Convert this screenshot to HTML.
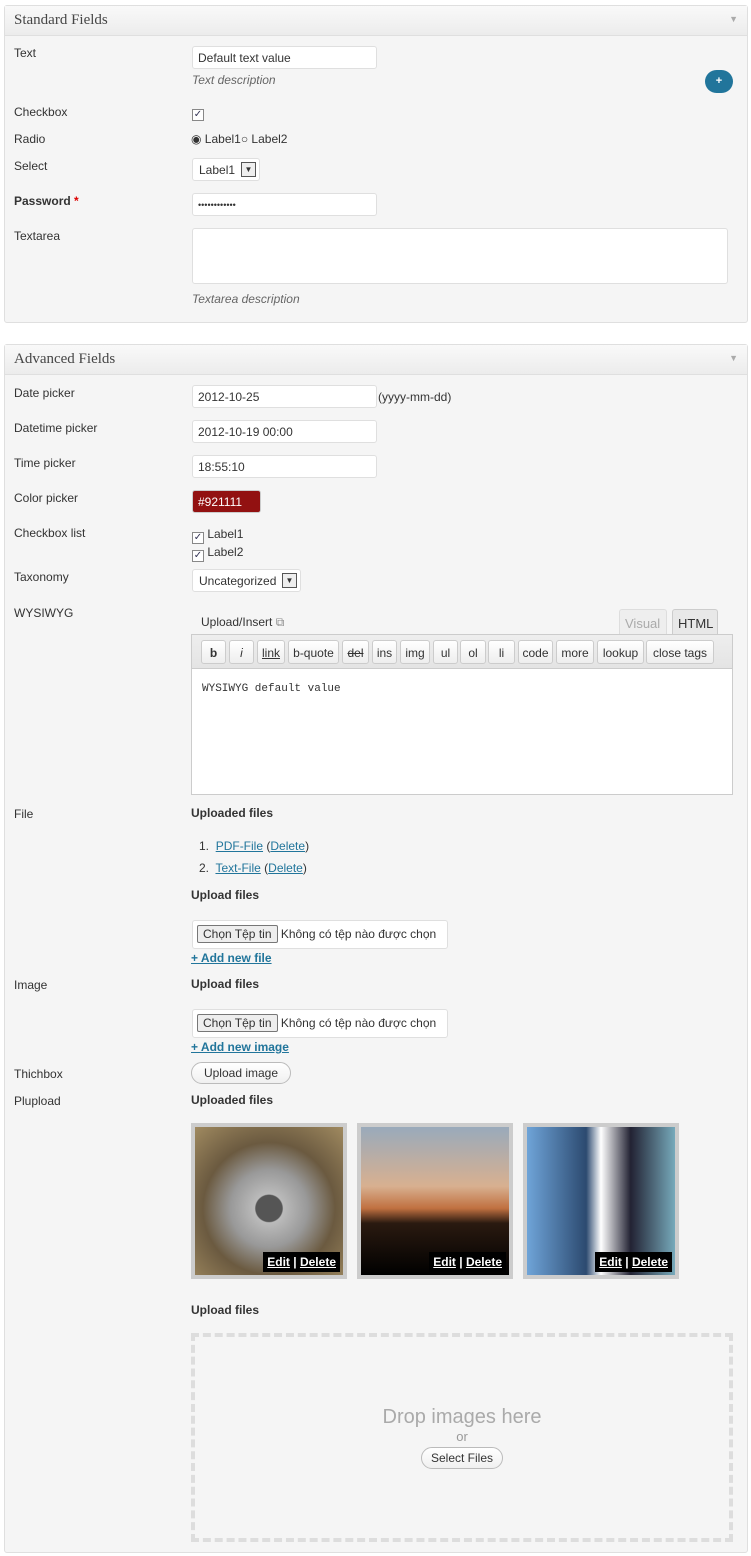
<!DOCTYPE html>
<html><head><meta charset="utf-8"><style>
*{box-sizing:border-box}
body{margin:0;width:751px;height:1556px;background:#fff;font-family:"Liberation Sans",Arial,sans-serif;font-size:12px;color:#333;position:relative;overflow:hidden}
.a{position:absolute}
.panel{position:absolute;left:4px;width:744px;background:#f5f5f5;border:1px solid #dfdfdf;border-radius:3px}
.hd{height:30px;background:linear-gradient(#f9f9f9,#ececec);border-bottom:1px solid #dfdfdf;font-family:"Liberation Serif",Georgia,serif;font-size:15px;color:#464646;padding:6px 9px}
.hd:after{content:"▼";position:absolute;right:9px;top:8px;font-size:9px;color:#aaa}
.lbl{position:absolute;left:14px;font-size:12px;color:#333}
.inp{position:absolute;background:#fff;border:1px solid #dfdfdf;border-radius:3px;height:23px;padding:4px 5px;font-size:12px;color:#333}
.desc{position:absolute;font-style:italic;color:#666;font-size:12px}
.cb{display:inline-block;width:12px;height:12px;border:1px solid #888;background:#fff;vertical-align:-2px;font-size:10px;line-height:10px;text-align:center;color:#335}
.btn{position:absolute;top:5px;border:1px solid #ccc;border-radius:3px;background:linear-gradient(#fff,#eee);height:24px;padding:5px 0;font-size:12px;color:#333;text-align:center}
.b{font-weight:bold}
a{color:#21759b}
.th{position:absolute;top:1123px;width:156px;height:156px;border:4px solid #ccc}
.ed{position:absolute;right:3px;bottom:3px;background:#000;color:#fff;font-weight:bold;padding:3px 4px;font-size:12px}
.ed u{color:#fff}
</style></head><body>
<div class="panel" style="top:5px;height:318px">
<div class="hd">Standard Fields</div>
</div>
<div class="lbl" style="top:46px">Text</div>
<div class="inp" style="left:192px;top:46px;width:185px">Default text value</div>
<div class="desc" style="left:192px;top:73px">Text description</div>
<div class="a" style="left:705px;top:70px;width:28px;height:23px;border-radius:12px;background:#21759b;color:#fff;text-align:center;font-size:11px;line-height:22px;font-weight:bold">+</div>
<div class="lbl" style="top:105px">Checkbox</div>
<div class="a" style="left:192px;top:104px"><span class="cb">✓</span></div>
<div class="lbl" style="top:132px">Radio</div>
<div class="a" style="left:191px;top:132px">◉ Label1○ Label2</div>
<div class="lbl" style="top:159px">Select</div>
<div class="inp" style="left:192px;top:158px;width:68px;padding:4px 6px">Label1 <span style="position:absolute;right:3px;top:3px;width:15px;height:15px;border:1px solid #555;background:#eee;font-size:8px;text-align:center;line-height:14px">▼</span></div>
<div class="lbl b" style="top:194px">Password <span style="color:#d00">*</span></div>
<div class="inp" style="left:192px;top:193px;width:185px;font-size:9px;padding-top:6px">••••••••••••</div>
<div class="lbl" style="top:229px">Textarea</div>
<div class="inp" style="left:192px;top:228px;width:536px;height:56px"></div>
<div class="desc" style="left:192px;top:292px">Textarea description</div>

<div class="panel" style="top:344px;height:1209px">
<div class="hd">Advanced Fields</div>
</div>
<div class="lbl" style="top:386px">Date picker</div>
<div class="inp" style="left:192px;top:385px;width:185px">2012-10-25</div>
<div class="a" style="left:378px;top:390px">(yyyy-mm-dd)</div>
<div class="lbl" style="top:421px">Datetime picker</div>
<div class="inp" style="left:192px;top:420px;width:185px">2012-10-19 00:00</div>
<div class="lbl" style="top:456px">Time picker</div>
<div class="inp" style="left:192px;top:455px;width:185px">18:55:10</div>
<div class="lbl" style="top:491px">Color picker</div>
<div class="inp" style="left:192px;top:490px;width:69px;background:#921111;color:#fff;border-color:#ccc">#921111</div>
<div class="lbl" style="top:526px">Checkbox list</div>
<div class="a" style="left:192px;top:526px;line-height:17px"><span class="cb">✓</span> Label1<br><span class="cb">✓</span> Label2</div>
<div class="lbl" style="top:570px">Taxonomy</div>
<div class="inp" style="left:192px;top:569px;width:109px;padding:4px 6px">Uncategorized <span style="position:absolute;right:3px;top:3px;width:15px;height:15px;border:1px solid #555;background:#eee;font-size:8px;text-align:center;line-height:14px">▼</span></div>
<div class="lbl" style="top:606px">WYSIWYG</div>
<div class="a" style="left:201px;top:615px">Upload/Insert <span style="color:#888">⧉</span></div>
<div class="a" style="left:619px;top:609px;width:48px;height:26px;border:1px solid #ddd;border-bottom:none;background:#eee;color:#aaa;font-size:13px;padding:6px 5px;border-radius:3px 3px 0 0">Visual</div>
<div class="a" style="left:672px;top:609px;width:46px;height:27px;border:1px solid #ccc;border-bottom:none;background:#e8e8e8;color:#333;font-size:13px;padding:6px 5px;border-radius:3px 3px 0 0">HTML</div>
<div class="a" style="left:191px;top:634px;width:542px;height:161px;border:1px solid #ccc;background:#fff">
<div style="position:relative;height:34px;background:linear-gradient(#eee,#e4e4e4);border-bottom:1px solid #ccc;white-space:nowrap">
<span class="btn b" style="left:9px;width:25px">b</span>
<span class="btn" style="left:37px;width:25px;font-style:italic">i</span>
<span class="btn" style="left:65px;width:28px;text-decoration:underline">link</span>
<span class="btn" style="left:96px;width:51px">b-quote</span>
<span class="btn" style="left:150px;width:27px;text-decoration:line-through">del</span>
<span class="btn" style="left:180px;width:25px">ins</span>
<span class="btn" style="left:208px;width:30px">img</span>
<span class="btn" style="left:241px;width:25px">ul</span>
<span class="btn" style="left:268px;width:26px">ol</span>
<span class="btn" style="left:296px;width:27px">li</span>
<span class="btn" style="left:326px;width:35px">code</span>
<span class="btn" style="left:364px;width:38px">more</span>
<span class="btn" style="left:405px;width:47px">lookup</span>
<span class="btn" style="left:454px;width:68px">close tags</span>
</div>
<div style="font-family:'Liberation Mono',monospace;font-size:11px;padding:14px 10px">WYSIWYG default value</div>
</div>
<div class="lbl" style="top:807px">File</div>
<div class="a b" style="left:191px;top:806px">Uploaded files</div>
<div class="a" style="left:199px;top:835px;line-height:22px">1.&nbsp; <a href="#">PDF-File</a> (<a href="#">Delete</a>)<br>2.&nbsp; <a href="#">Text-File</a> (<a href="#">Delete</a>)</div>
<div class="a b" style="left:191px;top:888px">Upload files</div>
<div class="inp" style="left:192px;top:920px;width:256px;height:29px;padding:6px 4px;white-space:nowrap"><span style="border:1px solid #777;background:#eee;padding:1px 5px;border-radius:2px">Chọn Tệp tin</span> Không có tệp nào được chọn</div>
<div class="a b" style="left:191px;top:951px"><a href="#">+ Add new file</a></div>
<div class="lbl" style="top:978px">Image</div>
<div class="a b" style="left:191px;top:977px">Upload files</div>
<div class="inp" style="left:192px;top:1009px;width:256px;height:29px;padding:6px 4px;white-space:nowrap"><span style="border:1px solid #777;background:#eee;padding:1px 5px;border-radius:2px">Chọn Tệp tin</span> Không có tệp nào được chọn</div>
<div class="a b" style="left:191px;top:1040px"><a href="#">+ Add new image</a></div>
<div class="lbl" style="top:1067px">Thichbox</div>
<div class="a" style="left:191px;top:1062px;width:100px;height:22px;border:1px solid #bbb;border-radius:11px;background:linear-gradient(#fff,#f0f0f0);text-align:center;line-height:20px">Upload image</div>
<div class="lbl" style="top:1094px">Plupload</div>
<div class="a b" style="left:191px;top:1093px">Uploaded files</div>
<div class="th" style="left:191px;background:radial-gradient(circle at 50% 55%,#555 0 12%,#bbb 13%,#999 35%,#6b5a40 60%,#a08a60 100%)"><div class="ed"><u>Edit</u> | <u>Delete</u></div></div>
<div class="th" style="left:357px;background:linear-gradient(#9ab 0%,#d8b090 40%,#c07040 55%,#2a1a10 65%,#000 100%)"><div class="ed"><u>Edit</u> | <u>Delete</u></div></div>
<div class="th" style="left:523px;background:linear-gradient(90deg,#6fa4d8,#2c4a70 40%,#fff 50%,#223 70%,#7ab)"><div class="ed"><u>Edit</u> | <u>Delete</u></div></div>
<div class="a b" style="left:191px;top:1303px">Upload files</div>
<div class="a" style="left:191px;top:1333px;width:542px;height:209px;border:4px dashed #ddd;text-align:center">
<div style="margin-top:69px;font-size:20px;color:#aaa">Drop images here</div>
<div style="color:#999;font-size:13px">or</div>
<div style="display:inline-block;margin-top:3px;border:1px solid #bbb;border-radius:11px;background:linear-gradient(#fff,#f0f0f0);padding:3px 9px">Select Files</div>
</div>
</body></html>
